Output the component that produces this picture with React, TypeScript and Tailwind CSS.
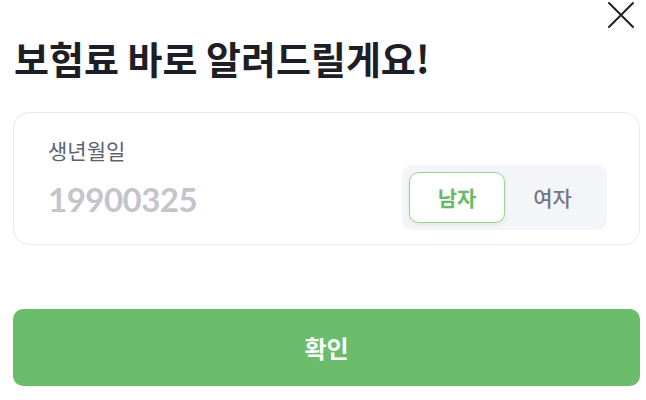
import React from "react";

export default function App() {
  const font = { fontFamily: 'Lato, "Noto Sans CJK KR", sans-serif' };
  const kr = { fontFamily: '"Noto Sans CJK KR", sans-serif' };
  return (
    <div className="w-[646px] h-[400px] bg-white overflow-hidden pl-[13px] pr-[6px]" style={font}>
      <div className="flex justify-end pt-[1px] pr-[5px]">
        <svg width="28" height="28" viewBox="0 0 28 28" fill="none">
          <path d="M2 2L26 26M26 2L2 26" stroke="#222226" strokeWidth="2" strokeLinecap="round" />
        </svg>
      </div>
      <h1 className="mt-[4px] pl-[1px] text-[38px] leading-[50px] font-bold text-[#1e1e26]" style={kr}>
        보험료 바로 알려드릴게요!
      </h1>
      <div className="mt-[29px] h-[133px] rounded-[16px] border border-[#e6e8ec] pl-[34px] pr-[32px] pt-[22px]">
        <div className="text-[21px] leading-[30px] text-[#5d6270]" style={kr}>생년월일</div>
        <div className="flex items-center justify-between">
          <div className="text-[33px] font-bold text-[#c2c5cc] leading-[40px] tracking-[-0.5px] mt-[2px]">19900325</div>
          <div className="flex h-[65px] w-[205px] rounded-[10px] bg-[#f4f5f9] p-[7px]" style={kr}>
            <div className="flex w-[96px] items-center justify-center rounded-[10px] border border-[#93d393] bg-white text-[21px] font-bold text-[#66bb66] shadow-[0_2px_4px_rgba(90,180,90,0.15)]">
              남자
            </div>
            <div className="flex flex-1 items-center justify-center text-[21px] font-medium text-[#727689]">
              여자
            </div>
          </div>
        </div>
      </div>
      <div className="mt-[64px] flex h-[77px] items-center justify-center rounded-[10px] bg-[#6bbd6b] text-[24px] font-bold text-white" style={kr}>
        확인
      </div>
    </div>
  );
}
